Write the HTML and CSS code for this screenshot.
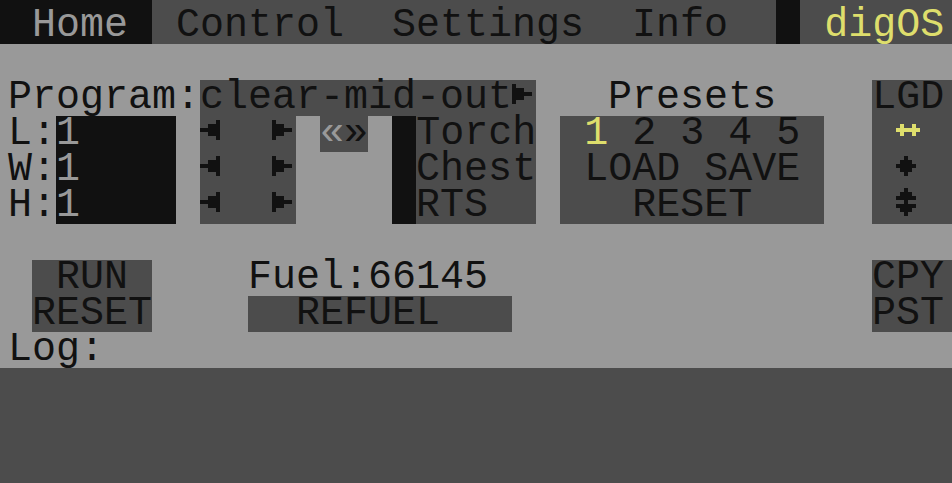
FILE: index.html
```html
<!DOCTYPE html>
<html>
<head>
<meta charset="utf-8">
<title>digOS</title>
<link rel="stylesheet" href="styles.css">
</head>
<body>
<div class="screen">
  <div class="row tabs">
    <span class="bk t-lg"> Home </span>
    <span class="gy"> Control  Settings  Info  </span>
    <span class="bk"> </span>
    <span class="gy t-ye"> digOS</span>
  </div>
  <div class="row"></div>
  <div class="row">
    <span class="lg">Program:</span>
    <span class="gy">clear-mid-out<svg class="ic" viewBox="0 0 6 9" shape-rendering="crispEdges"><rect x="0" y="1" width="1" height="5"/><rect x="1" y="2" width="2" height="3"/><rect x="3" y="3" width="2" height="1"/></svg></span>
    <span class="lg">   Presets    </span>
    <span class="gy">LGD</span>
  </div>
  <div class="row">
    <span class="lg">L:</span>
    <span class="bk t-lg">1    </span>
    <span class="lg"> </span>
    <span class="gy"><svg class="ic" viewBox="0 0 6 9" shape-rendering="crispEdges"><rect x="0" y="3" width="2" height="1"/><rect x="2" y="2" width="2" height="3"/><rect x="4" y="1" width="1" height="5"/></svg>  <svg class="ic" viewBox="0 0 6 9" shape-rendering="crispEdges"><rect x="0" y="1" width="1" height="5"/><rect x="1" y="2" width="2" height="3"/><rect x="3" y="3" width="2" height="1"/></svg></span>
    <span class="lg"> </span>
    <span class="gy"><span class="t-lg">«</span>»</span>
    <span class="lg"> </span>
    <span class="bk"> </span>
    <span class="gy">Torch</span>
    <span class="lg"> </span>
    <span class="gy"> <span class="t-ye">1</span> 2 3 4 5 </span>
    <span class="lg">  </span>
    <span class="gy t-ye"> <svg class="ic" viewBox="0 0 6 9" shape-rendering="crispEdges"><rect x="1" y="2" width="1" height="3"/><rect x="4" y="2" width="1" height="3"/><rect x="0" y="3" width="6" height="1"/></svg> </span>
  </div>
  <div class="row">
    <span class="lg">W:</span>
    <span class="bk t-lg">1    </span>
    <span class="lg"> </span>
    <span class="gy"><svg class="ic" viewBox="0 0 6 9" shape-rendering="crispEdges"><rect x="0" y="3" width="2" height="1"/><rect x="2" y="2" width="2" height="3"/><rect x="4" y="1" width="1" height="5"/></svg>  <svg class="ic" viewBox="0 0 6 9" shape-rendering="crispEdges"><rect x="0" y="1" width="1" height="5"/><rect x="1" y="2" width="2" height="3"/><rect x="3" y="3" width="2" height="1"/></svg></span>
    <span class="lg">    </span>
    <span class="bk"> </span>
    <span class="gy">Chest</span>
    <span class="lg"> </span>
    <span class="gy"> LOAD SAVE </span>
    <span class="lg">  </span>
    <span class="gy"> <svg class="ic" viewBox="0 0 6 9" shape-rendering="crispEdges"><rect x="2" y="1" width="1" height="1"/><rect x="1" y="2" width="3" height="1"/><rect x="0" y="3" width="5" height="1"/><rect x="1" y="4" width="3" height="1"/><rect x="2" y="5" width="1" height="1"/></svg> </span>
  </div>
  <div class="row">
    <span class="lg">H:</span>
    <span class="bk t-lg">1    </span>
    <span class="lg"> </span>
    <span class="gy"><svg class="ic" viewBox="0 0 6 9" shape-rendering="crispEdges"><rect x="0" y="3" width="2" height="1"/><rect x="2" y="2" width="2" height="3"/><rect x="4" y="1" width="1" height="5"/></svg>  <svg class="ic" viewBox="0 0 6 9" shape-rendering="crispEdges"><rect x="0" y="1" width="1" height="5"/><rect x="1" y="2" width="2" height="3"/><rect x="3" y="3" width="2" height="1"/></svg></span>
    <span class="lg">    </span>
    <span class="bk"> </span>
    <span class="gy">RTS  </span>
    <span class="lg"> </span>
    <span class="gy">   RESET   </span>
    <span class="lg">  </span>
    <span class="gy"> <svg class="ic" viewBox="0 0 6 9" shape-rendering="crispEdges"><rect x="2" y="0" width="1" height="1"/><rect x="1" y="1" width="3" height="1"/><rect x="0" y="2" width="5" height="1"/><rect x="2" y="3" width="1" height="1"/><rect x="0" y="4" width="5" height="1"/><rect x="1" y="5" width="3" height="1"/><rect x="2" y="6" width="1" height="1"/></svg> </span>
  </div>
  <div class="row"></div>
  <div class="row">
    <span class="lg"> </span>
    <span class="gy"> RUN </span>
    <span class="lg">    Fuel:66145</span>
    <span class="lg fill"></span>
    <span class="gy">CPY</span>
  </div>
  <div class="row">
    <span class="lg"> </span>
    <span class="gy">RESET</span>
    <span class="lg">    </span>
    <span class="gy">  REFUEL   </span>
    <span class="lg fill"></span>
    <span class="gy">PST</span>
  </div>
  <div class="row">
    <span class="lg">Log:</span>
  </div>
  <div class="log"></div>
</div>
</body>
</html>
```

FILE: styles.css
```css
html, body {
  margin: 0;
  padding: 0;
  background: #999999;
}

.screen {
  width: 952px;
  height: 483px;
  display: flex;
  flex-direction: column;
  overflow: hidden;
  font-family: "Liberation Mono", "DejaVu Sans Mono", monospace;
  font-size: 40px;
  line-height: 36px;
  color: #111111;
}

.row {
  display: flex;
  height: 36px;
  flex: none;
}

.row > span {
  display: block;
  white-space: pre;
  height: 36px;
}

.row > span:first-child {
  padding-left: 8px;
}

.row > span:last-child {
  padding-right: 8px;
}

.tabs {
  height: 44px;
}

.tabs > span {
  padding-top: 8px;
  height: 36px;
}

.fill {
  flex: 1;
}

.bk { background: #111111; }
.gy { background: #4c4c4c; }
.lg { background: #999999; }

.t-lg { color: #999999; }
.t-ye { color: #dede6c; }

.ic {
  display: inline-block;
  vertical-align: top;
  width: 24px;
  height: 36px;
  fill: currentColor;
}

.log {
  flex: 1;
  background: #4c4c4c;
}
```
